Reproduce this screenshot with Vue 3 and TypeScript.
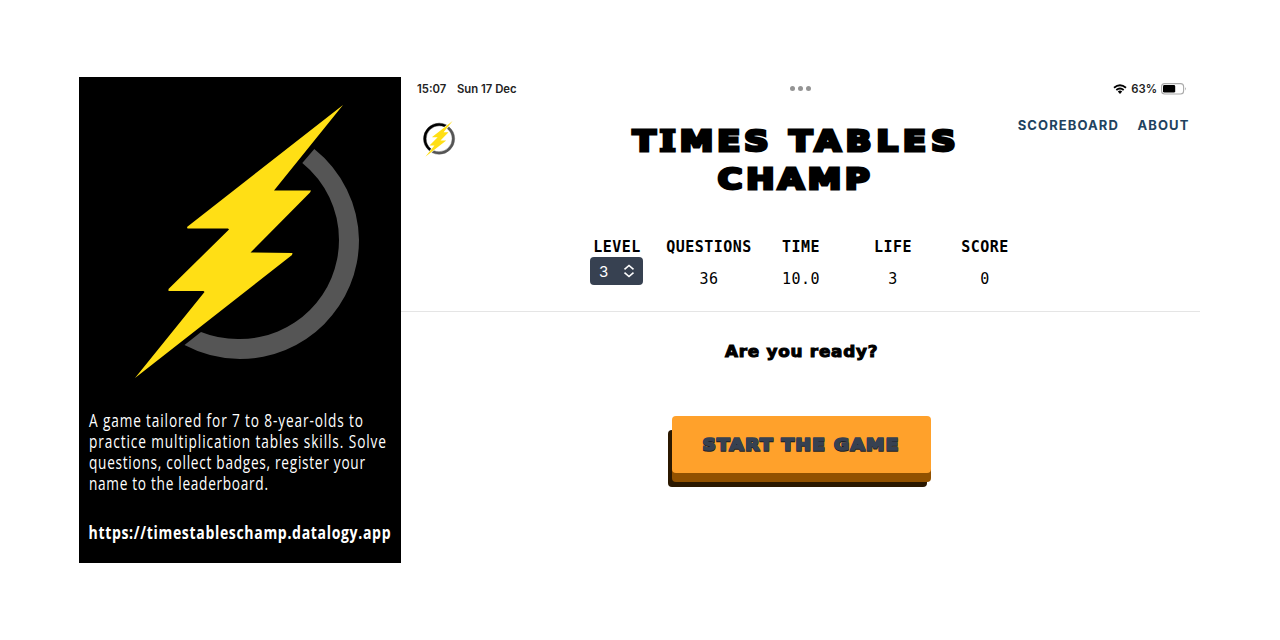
<script setup lang="ts">
interface Line { text: string; y: number; width: number }
interface Stat { label: string; value: string }

const NARROW = 0.78
const WIDE = 1.12
const blurb: Line[] = [
  { text: 'A game tailored for 7 to 8-year-olds to', y: 17.3, width: 274 },
  { text: 'practice multiplication tables skills. Solve', y: 38.3, width: 297 },
  { text: 'questions, collect badges, register your', y: 59.3, width: 276 },
  { text: 'name to the leaderboard.', y: 80.3, width: 179 },
]
const stats: Stat[] = [
  { label: 'QUESTIONS', value: '36' },
  { label: 'TIME', value: '10.0' },
  { label: 'LIFE', value: '3' },
  { label: 'SCORE', value: '0' },
]
</script>

<template>
  <main class="canvas">
    <aside class="poster">
      <svg class="emblem" viewBox="0 0 322 320" aria-hidden="true">
        <defs>
          <path id="arc" d="M235.3 72A119 119 0 0 1 280 163A119 119 0 0 1 161 282A119 119 0 0 1 105.5 268L122 255A99 99 0 0 0 161 262A99 99 0 0 0 260 163A99 99 0 0 0 223.3 86Z" />
          <path id="bolt" d="M264 28L195 113.5L232 113.5L231 115.5L171.5 175.5L213.5 176L213 178L56 301L125.5 215L124.5 214L89.5 214L89.5 212L150 152.5L149 151.5L108.5 151.5L108 150Z" />
        </defs>
        <use href="#arc" class="grey" />
        <use href="#bolt" class="yellow" />
      </svg>
      <svg class="blurb" viewBox="0 0 312 90">
        <g :transform="`scale(${NARROW} 1)`">
          <text v-for="l in blurb" :key="l.y" x="0" :y="l.y" :textLength="l.width / NARROW">{{ l.text }}</text>
        </g>
      </svg>
      <svg class="url" viewBox="0 0 312 30">
        <text :transform="`scale(${NARROW} 1)`" x="-.6" y="19.300" :textLength="302 / NARROW">https://timestableschamp.datalogy.app</text>
      </svg>
    </aside>

    <section class="app">
      <div class="status">
        <span class="clock">15:07</span>
        <span class="date">Sun 17 Dec</span>
        <span class="dots"><i></i><i></i><i></i></span>
        <svg class="wifi" viewBox="0 0 14 10" aria-hidden="true">
          <path d="M1 3.7Q7 -1.3 13 3.7M3.3 6Q7 2.9 10.7 6" />
          <path class="tip" d="M4.8 7.5Q7 5.7 9.2 7.5L7 9.9Z" />
        </svg>
        <span class="percent">63%</span>
        <svg class="battery" viewBox="0 0 26 12" aria-hidden="true">
          <rect x=".6" y=".6" width="22" height="10.4" rx="3" class="shell" />
          <rect x="2" y="2" width="12.2" height="7.6" rx="1.4" />
          <path d="M24 4Q25.6 5.8 24 7.6Z" class="nub" />
        </svg>
      </div>

      <header class="header">
        <svg class="logo" viewBox="40 20 248 290" aria-hidden="true">
          <use href="#arc" class="ring" transform="rotate(180 161 163)" />
          <use href="#arc" class="ring grey" />
          <use href="#bolt" class="yellow" />
        </svg>
        <h1>
          <svg class="title" viewBox="0 0 330 76">
            <g transform="scale(1.2 1)">
              <text x="3.200" y="31.200" textLength="113">T<tspan class="slab">I</tspan>MES</text>
              <text x="133.500" y="31.200" textLength="138.500">TABLES</text>
              <text x="74" y="69.200" textLength="126.500">CHAMP</text>
            </g>
          </svg>
        </h1>
        <nav><a>SCOREBOARD</a><a>ABOUT</a></nav>
      </header>

      <div class="stats">
        <div class="stat level">
          <b>LEVEL</b>
          <button class="select">
            3
            <svg viewBox="0 0 12 14" aria-hidden="true"><path d="M1.5 5.3L6 1.5L10.5 5.3M1.5 8.7L6 12.5L10.5 8.7" /></svg>
          </button>
        </div>
        <div v-for="s in stats" :key="s.label" class="stat">
          <b>{{ s.label }}</b>
          <span>{{ s.value }}</span>
        </div>
      </div>

      <div class="play">
        <svg class="ready" viewBox="0 0 154 24">
          <text :transform="`scale(${WIDE} 1)`" x=".8" y="17" :textLength="152.5 / WIDE">Are you ready?</text>
        </svg>
        <button class="start">
          <svg viewBox="0 0 198 24">
            <g :transform="`scale(${WIDE} 1)`">
              <text class="under" x=".4" y="18.400" :textLength="196 / WIDE">START THE GAME</text>
              <text x=".4" y="17.400" :textLength="196 / WIDE">START THE GAME</text>
            </g>
          </svg>
        </button>
      </div>
    </section>
  </main>
</template>

<style>
body { margin: 0; background: #fff; }
</style>

<style scoped>
* { box-sizing: border-box; }
svg { display: block; overflow: visible; }
button { border: 0; padding: 0; }
.canvas { display: flex; width: 1280px; height: 640px; padding: 77px 79px; background: #fff; color: #000; font-family: Inter, sans-serif; overflow: hidden; }
.poster { width: 322px; height: 486px; background: #000; flex: none; }
.emblem { width: 322px; height: 320px; }
.grey { fill: #555; }
.yellow { fill: #ffdf15; }
.blurb { width: 312px; height: 90px; margin: 13px 0 0 10px; fill: #fff; font: 17.5px "Open Sans", sans-serif; }
.url { width: 312px; height: 30px; margin: 20px 0 0 10px; fill: #fff; font: 700 18px "Open Sans", sans-serif; }
.app { width: 799px; height: 486px; flex: none; }
.status { display: flex; align-items: center; height: 23px; padding: 0 13px 0 16px; font-size: 11.3px; font-weight: 600; color: #222; }
.clock { width: 40px; }
.date { width: 333px; }
.dots { display: flex; gap: 3px; flex: 1; }
.dots i { width: 5px; height: 5px; border-radius: 50%; background: #949494; }
.wifi { width: 14px; height: 10px; fill: none; stroke: #000; stroke-width: 1.8; }
.tip { fill: #000; stroke: none; }
.percent { margin: 0 4px; }
.battery { width: 26px; height: 12px; }
.shell { fill: none; stroke: #aaa; stroke-width: 1.1; }
.nub { fill: #999; }
.header { display: grid; grid-template-columns: 228px 330px 1fr; height: 138px; padding-top: 20px; }
.logo { width: 33px; height: 38px; margin-left: 22px; }
.ring { stroke: #000; stroke-width: 3; }
.ring.grey { stroke: #555; }
h1 { margin: 0; }
.title { width: 330px; height: 76px; font: 700 28px "DejaVu Sans", sans-serif; stroke: #000; stroke-width: 3; stroke-linejoin: miter; stroke-miterlimit: 2; }
.slab { font-family: "DejaVu Serif", serif; }
nav { display: flex; justify-content: flex-end; gap: 18.5px; padding: 0 10.5px 0 0; font-size: 13px; line-height: 10px; font-weight: 700; letter-spacing: 1.1px; color: #21425f; }
.stats { display: grid; grid-template-columns: repeat(5, 92px); height: 74px; padding-left: 170px; border-bottom: 1px solid #e5e5e5; font-family: "DejaVu Sans Mono", monospace; }
.stat { display: flex; flex-direction: column; align-items: center; font-size: 15px; letter-spacing: .45px; }
.stat b { height: 18px; line-height: 19px; }
.stat span { margin-top: 15px; line-height: 17px; }
.select { display: flex; align-items: center; justify-content: space-between; width: 53px; height: 28px; margin: 1px 1px 0 0; padding: 0 8px 0 9px; border-radius: 4px; background: #374151; color: #fff; font: 15px Inter, sans-serif; }
.select svg { width: 12px; height: 14px; fill: none; stroke: #fff; stroke-width: 1.6; }
.play { display: flex; flex-direction: column; align-items: center; }
.ready { width: 154px; height: 24px; margin-top: 28px; font: 700 15px "DejaVu Sans", sans-serif; stroke: #000; stroke-width: 1; }
.start { display: grid; place-items: center; width: 259px; height: 57px; margin: 52px 0 0 1px; border-radius: 4px; background: #ffa12b; box-shadow: 0 9px 0 #915100, -4px 14px 0 #2b1800; }
.start svg { width: 198px; height: 24px; font: 700 16.5px "DejaVu Sans", sans-serif; fill: #374151; stroke: #374151; stroke-width: 1.7; stroke-linejoin: miter; stroke-miterlimit: 2; }
.start .under { fill: #171c25; stroke: #171c25; }
</style>
